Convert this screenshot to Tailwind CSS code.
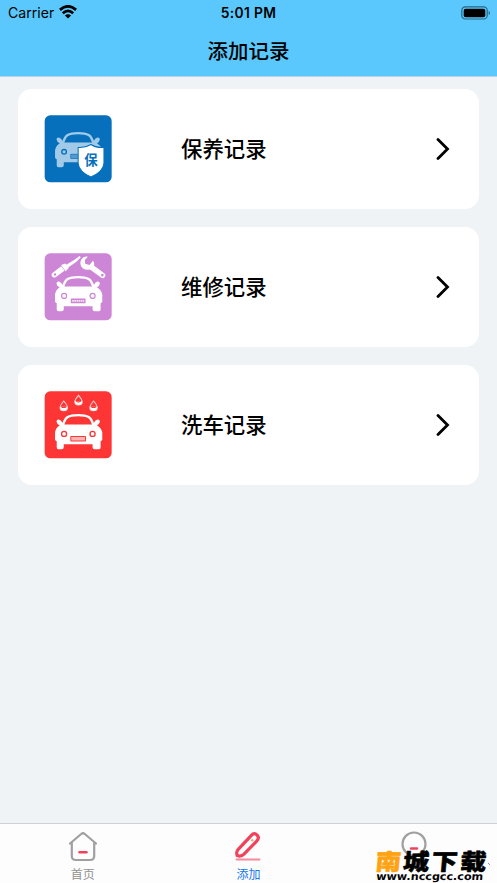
<!DOCTYPE html>
<html lang="zh-CN">
<head>
<meta charset="utf-8">
<meta name="viewport" content="width=device-width, initial-scale=1">
<title>添加记录</title>
<script src="https://cdn.jsdelivr.net/npm/@tailwindcss/browser@4"></script>
</head>
<body class="font-['Inter','Noto_Sans_CJK_SC',sans-serif] text-black">
<svg class="hidden">
  <defs>
    <g id="car">
      <path d="M84 130C90 107 100 101 129 101C158 101 168 107 174 130" fill="none" stroke="currentColor" stroke-width="7"/>
      <path d="M64 119Q67 111 77 117L86 129H172L181 117Q191 111 194 119Q193 128 185 131Q198 139 201 152V174Q201 178 196 179V198Q196 203 191 203H178Q172 203 172 197V188H86V197Q86 203 80 203H70Q65 203 65 198V179Q60 178 60 174V152Q62 139 74 131Q65 128 64 119Z" fill="currentColor"/>
    </g>
  </defs>
</svg>
<div class="relative flex h-[883px] w-[497px] flex-col overflow-hidden bg-[#eff3f6]">
  <header class="h-[77px] shrink-0 border-b border-[#b5d3ea] bg-[#5ac8fc]">
    <div class="grid h-[27px] grid-cols-3 items-center px-[8px] text-[14px]">
      <div class="flex items-center gap-[5px]">
        <span class="text-[14.1px] leading-none">Carrier</span>
        <svg class="h-[14px] w-[18px] -translate-y-[2px]" viewBox="0 0 18 14" fill="none" stroke="#000" stroke-width="2.8"><path d="M.9 4.9Q9-2.2 17.1 4.9M3.8 8.2Q9 3.6 14.2 8.2"/><path d="M9 13.6L5.9 10.5Q9 7.8 12.1 10.5Z" fill="#000" stroke="none"/></svg>
      </div>
      <div class="text-center text-[13.8px] leading-none font-semibold tracking-[0.35px]">5:01 PM</div>
      <svg class="h-[14px] w-[30px] translate-x-[2px] -translate-y-[1px] justify-self-end" viewBox="0 0 30 14"><rect x=".8" y=".8" width="25.4" height="12.2" rx="3.6" fill="none" stroke="#276682" stroke-width="1.2"/><rect x="2.7" y="2.7" width="21.6" height="8.6" rx="2" fill="#000"/><path d="M27.6 5Q29 5.5 29 7T27.6 9Z" fill="#276682"/></svg>
    </div>
    <h1 class="h-[49px] text-center text-[20.5px] leading-[50px] font-medium">添加记录</h1>
  </header>

  <main class="flex flex-1 flex-col gap-[18px] px-[18px] pt-[12px]">
    <section class="flex h-[120px] w-[461px] items-center rounded-[14px] bg-white pr-[29px] pl-[26px]">
      <svg class="h-[68px] w-[68px] shrink-0" viewBox="27 29 203 203">
        <rect x="29" y="30" width="200" height="200" rx="17" fill="#0670bc"/>
        <g transform="translate(0 -18)" color="#a1cae8"><use href="#car"/></g>
        <circle cx="87" cy="139" r="7" fill="#a1cae8" stroke="#0670bc" stroke-width="4"/>
        <rect x="107" y="146" width="38" height="13" fill="#5799cb" stroke="#0670bc" stroke-width="2"/>
        <path d="M167 117Q184 128 206 126V173Q204 198 167 214Q131 198 129 173V126Q150 128 167 117Z" fill="#fff" stroke="#0670bc" stroke-width="3"/>
        <text x="167" y="178" text-anchor="middle" font-family="Noto Sans CJK SC, sans-serif" font-size="40" font-weight="700" fill="#0670bc">保</text>
      </svg>
      <span class="ml-[69px] flex-1 text-[21.4px] leading-8 font-medium">保养记录</span>
      <svg class="h-[22px] w-[14px]" viewBox="0 0 14 22" fill="none" stroke="#000" stroke-width="2.8" stroke-linecap="round"><path d="M2 1.5L11.5 11L2 20.5"/></svg>
    </section>

    <section class="flex h-[120px] w-[461px] items-center rounded-[14px] bg-white pr-[29px] pl-[26px]">
      <svg class="h-[68px] w-[68px] shrink-0" viewBox="27 29 203 203">
        <rect x="29" y="30" width="200" height="200" rx="17" fill="#cd85d5"/>
        <g color="#fff"><use href="#car"/></g>
        <g fill="#fff" stroke="#cd85d5" stroke-width="3.5"><circle cx="87" cy="157" r="7.5"/><circle cx="172" cy="157" r="7.5"/></g>
        <rect x="107" y="165" width="44" height="14" rx="1" fill="#cd85d5"/>
        <path d="M111 172H147" stroke="#f7e4f8" stroke-width="5" stroke-dasharray="5 1.5"/>
        <path d="M92 65L117 50L133 38L137 42L123 56L99 72Z" fill="#fff"/>
        <path d="M58 94L82 76" stroke="#fff" stroke-width="16" stroke-linecap="round"/>
        <path d="M78 65L91 60L101 74L91 84Z" fill="#fff"/>
        <path d="M78 67L91 83" stroke="#cd85d5" stroke-width="2"/>
        <circle cx="60" cy="93" r="3.5" fill="#cd85d5"/>
        <path d="M171 73L202 96" stroke="#fff" stroke-width="16" stroke-linecap="round"/>
        <path d="M158 40Q147 38 140 46Q133 55 137 67Q144 80 158 79Q175 79 177 63Q177 56 173 52L163 65L150 61L149 50Z" fill="#fff"/>
        <circle cx="201" cy="95" r="4" fill="#cd85d5"/>
      </svg>
      <span class="ml-[69px] flex-1 text-[21.4px] leading-8 font-medium">维修记录</span>
      <svg class="h-[22px] w-[14px]" viewBox="0 0 14 22" fill="none" stroke="#000" stroke-width="2.8" stroke-linecap="round"><path d="M2 1.5L11.5 11L2 20.5"/></svg>
    </section>

    <section class="flex h-[120px] w-[461px] items-center rounded-[14px] bg-white pr-[29px] pl-[26px]">
      <svg class="h-[68px] w-[68px] shrink-0" viewBox="27 29 203 203">
        <rect x="29" y="30" width="200" height="200" rx="17" fill="#fd3535"/>
        <g color="#fff"><use href="#car"/></g>
        <g fill="#fff" stroke="#fd3535" stroke-width="4"><circle cx="87" cy="157" r="7.5"/><circle cx="172" cy="157" r="7.5"/></g>
        <rect x="107" y="165" width="44" height="13" rx="1" fill="#ffb5b5" stroke="#fd3535" stroke-width="3"/>
        <g fill="none" stroke="#ffdada" stroke-width="3">
          <path d="M86 59Q75 72 75 78A11 10 0 0 0 97 78Q97 72 86 59Z"/><path d="M130 42Q119 55 119 61A11 10 0 0 0 141 61Q141 55 130 42Z"/><path d="M175 59Q164 72 164 78A11 10 0 0 0 186 78Q186 72 175 59Z"/>
        </g>
        <path d="M75 76H97Q97 88 86 88T75 76ZM119 59H141Q141 71 130 71T119 59ZM164 76H186Q186 88 175 88T164 76Z" fill="#fff"/>
        <path d="M79 76Q86 81 93 76M123 59Q130 64 137 59M168 76Q175 81 182 76" fill="none" stroke="#fd3535" stroke-width="3"/>
      </svg>
      <span class="ml-[69px] flex-1 text-[21.4px] leading-8 font-medium">洗车记录</span>
      <svg class="h-[22px] w-[14px]" viewBox="0 0 14 22" fill="none" stroke="#000" stroke-width="2.8" stroke-linecap="round"><path d="M2 1.5L11.5 11L2 20.5"/></svg>
    </section>
  </main>

  <nav class="grid h-[60px] shrink-0 grid-cols-3 border-t border-[#cfd1d3] bg-[#fdfdfd] text-[12px] leading-[16px]">
    <a class="flex flex-col items-center pt-[7px] text-[#929292]">
      <svg class="h-[32px] w-[30px]" viewBox="0 0 30 32" fill="none" stroke="#a0a0a0" stroke-width="2.2" stroke-linecap="round" stroke-linejoin="round"><path d="M2 12.5L13.2 3Q15 1.5 16.8 3L28 12.5M3.8 11.5V25Q3.8 29 7.8 29H22.2Q26.2 29 26.2 25V11.5"/><path d="M11.5 21.3H18.5" stroke="#f2415d" stroke-width="2.4"/></svg>
      <span class="mt-[4px]">首页</span>
    </a>
    <a class="flex flex-col items-center pt-[7px] text-[#1677e8]">
      <svg class="h-[32px] w-[30px]" viewBox="0 0 30 32" fill="none"><path d="M4.2 24.5Q2.8 20.8 5.2 18.4L18.4 4.3Q21.4 1.2 24 4Q26.8 6.8 23.8 10L11 23.2Q8 26 4.2 24.5Z" stroke="#f2415d" stroke-width="3.2"/><path d="M18.5 8.5L20 10" stroke="#ff9c50" stroke-width="2"/><path d="M3.5 28.5H26.5" stroke="#f88a9b" stroke-width="2" stroke-linecap="round"/></svg>
      <span class="mt-[4px]">添加</span>
    </a>
    <a class="flex flex-col items-center pt-[7px]">
      <svg class="h-[32px] w-[30px]" viewBox="0 0 30 32" fill="none"><circle cx="15" cy="13" r="11.5" stroke="#a0a0a0" stroke-width="2.2"/><path d="M12 17.5H18" stroke="#f2415d" stroke-width="2.4" stroke-linecap="round"/></svg>
    </a>
  </nav>

  <svg class="absolute right-0 bottom-0 h-[40px] w-[125px]" viewBox="372 843 125 40">
    <g font-family="Noto Sans CJK SC, sans-serif" font-size="24" font-weight="900" stroke-width=".6" stroke-linejoin="round">
      <text transform="translate(375 870.3) skewX(-5) scale(1.06 .94)" fill="#ffa313" stroke="#ffa313">南</text>
      <text transform="translate(402.5 870.3) skewX(-5) scale(1.08 .94)" textLength="77" fill="#000" stroke="#000">城下载</text>
    </g>
    <text transform="translate(376 880) skewX(-5)" font-family="DejaVu Sans, sans-serif" font-size="10.5" font-weight="700" textLength="107" lengthAdjust="spacingAndGlyphs" fill="#000">www.nccgcc.com</text>
    <path d="M488 863l2 2" stroke="#8195a6"/>
  </svg>
</div>
</body>
</html>
